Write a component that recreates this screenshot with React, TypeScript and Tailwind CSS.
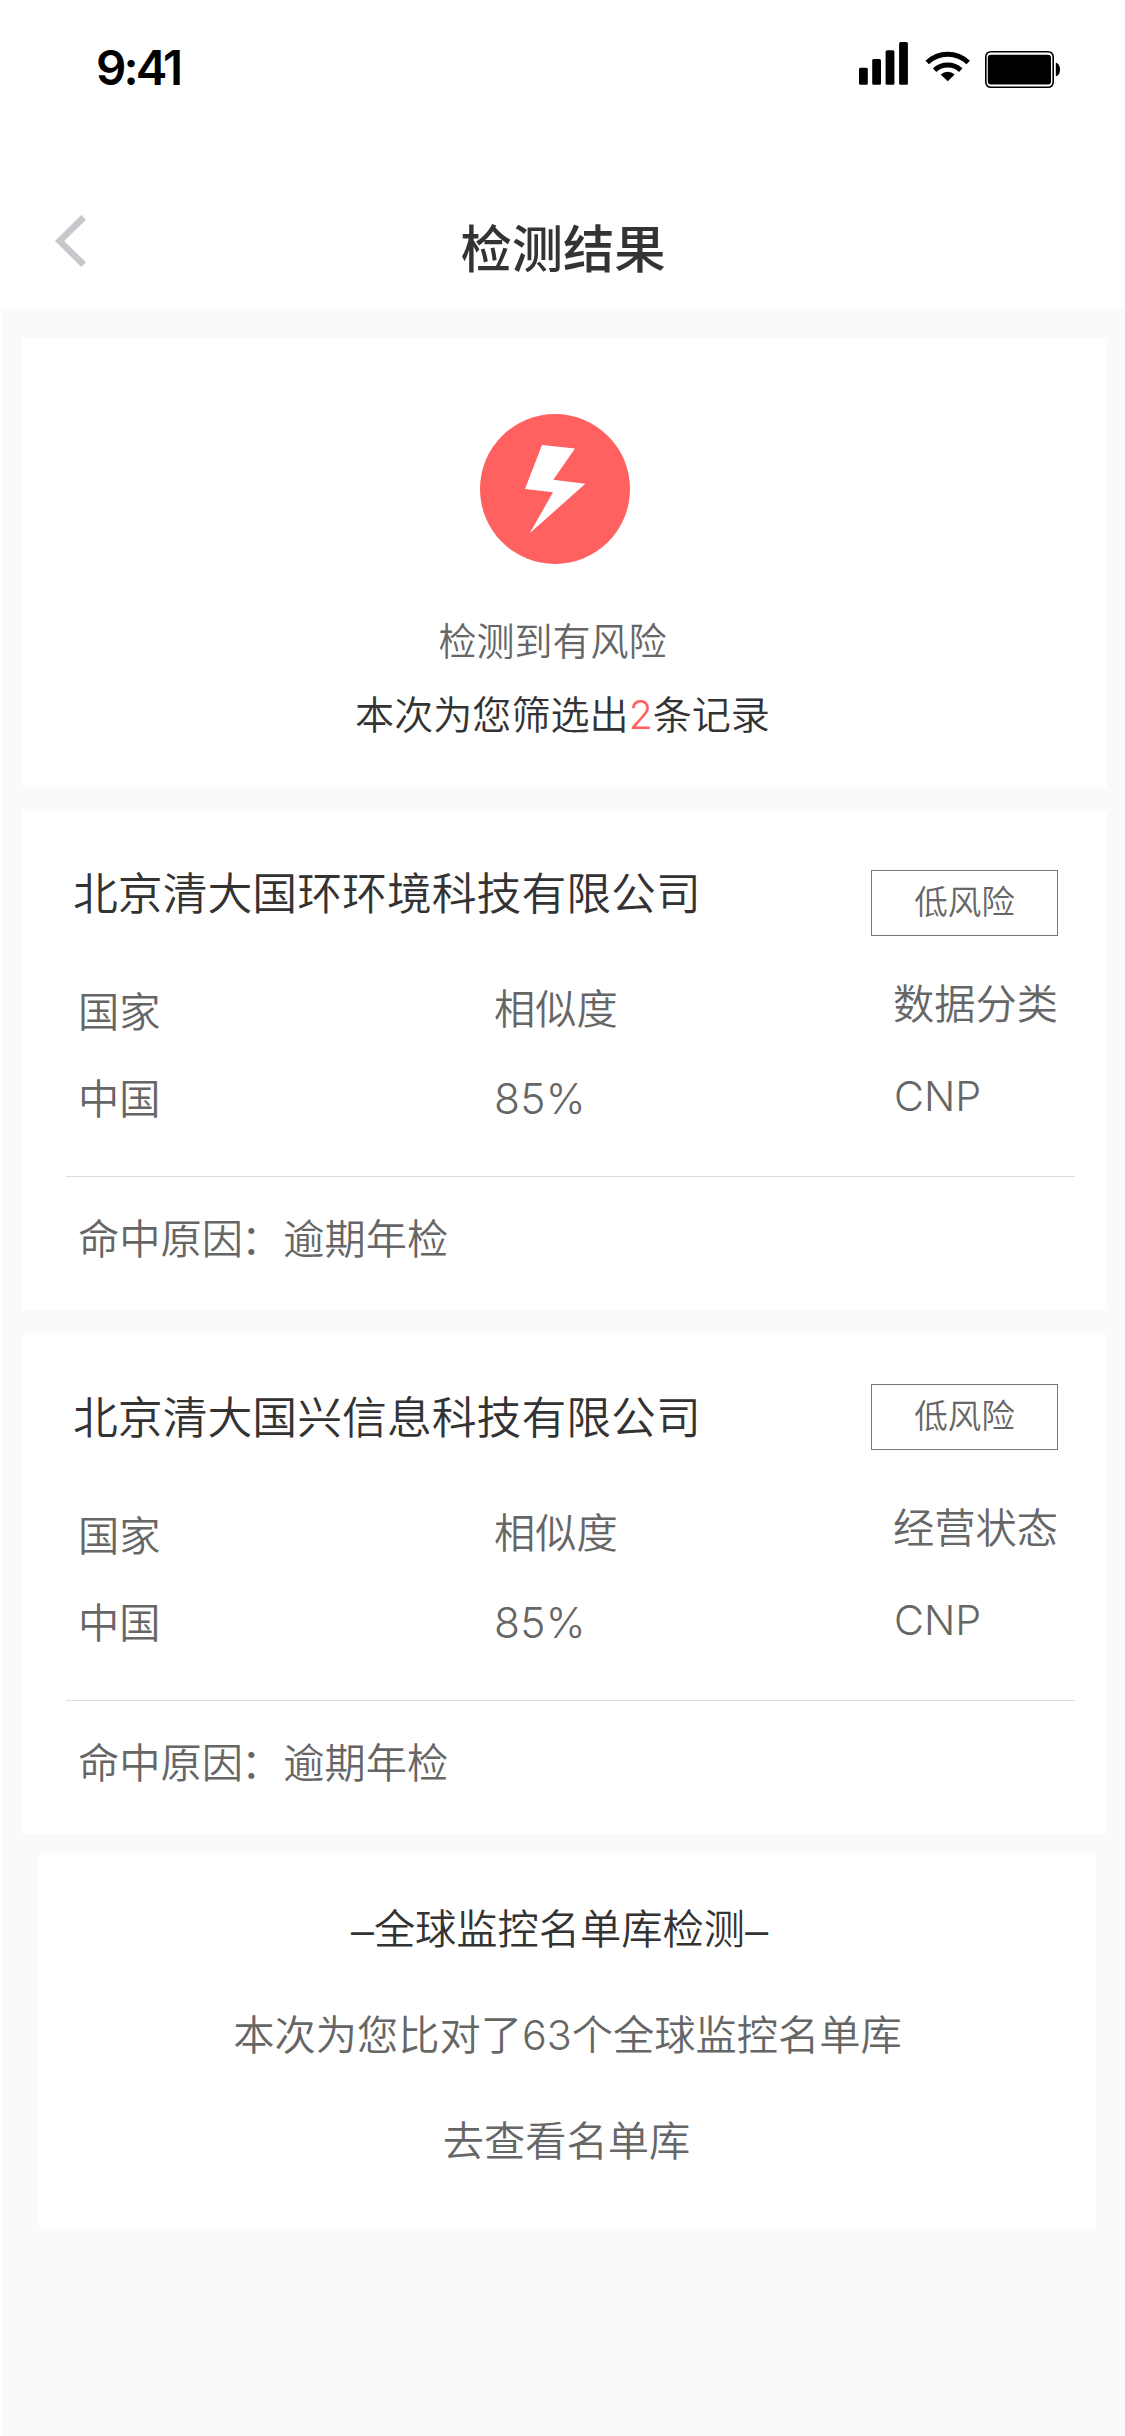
import type { ReactNode } from "react";

type Company = {
  name: string;
  category: string;
  badgeOffset: string;
};

const companies: Company[] = [
  { name: "北京清大国环环境科技有限公司", category: "数据分类", badgeOffset: "mt-[59px]" },
  { name: "北京清大国兴信息科技有限公司", category: "经营状态", badgeOffset: "mt-[49px]" },
];

function StatusBar() {
  return (
    <div className="flex h-[132px] items-start justify-between pl-[96px] pr-[64px]">
      <span className="mt-[38px] font-['Inter'] text-[47.500px] font-[570] leading-[60px] tracking-[-2.900px] text-black">
        9:41
      </span>
      <svg className="mt-[42px] h-[47px] w-[202px]" viewBox="0 0 202 47" fill="#000">
        <rect x="0" y="25.7" width="8.8" height="17" rx="1.5" />
        <rect x="13.2" y="17" width="8.8" height="25.7" rx="1.5" />
        <rect x="26.6" y="8.3" width="8.8" height="34.4" rx="1.5" />
        <rect x="40.1" y="0" width="8.8" height="42.7" rx="1.5" />
        <g fill="none" stroke="#000" strokeWidth="5">
          <path d="M68.2 20.500a29.500 29.500 0 0 1 41 0" />
          <path d="M75.6 28.100a19.200 19.200 0 0 1 26.2 0" />
        </g>
        <path d="M88.7 39.300l-7-6.900a10.500 10.500 0 0 1 14 0z" />
        <rect x="126.8" y="9.7" width="67.4" height="35.6" rx="5" fill="none" stroke="#000" strokeWidth="1.6" />
        <rect x="128.800" y="12.800" width="63.2" height="29.600" rx="3" />
        <path d="M196.8 20.7c2.6.5 4.2 3.200 4.200 6.800s-1.600 6.300-4.200 6.800z" />
      </svg>
    </div>
  );
}

function Header() {
  return (
    <div className="grid h-[177px] grid-cols-[200px_1fr_200px] items-start">
      <svg className="ml-[55px] mt-[83px] h-[52px] w-[31px]" viewBox="0 0 31 52" fill="none" stroke="#c7c7cc" strokeWidth="6.6">
        <path d="M28.600 2.300L4.600 26l24 23.700" />
      </svg>
      <h1 className="ml-px mt-[87px] text-center text-[51.300px] font-medium leading-[60px] text-[#333]">检测结果</h1>
    </div>
  );
}

function Summary() {
  return (
    <section className="ml-[20px] mt-[29px] flex h-[449px] w-[1085px] flex-col items-center bg-white">
      <svg className="mr-[19px] mt-[76px] h-[150px] w-[150px]" viewBox="0 0 150 150">
        <circle cx="75" cy="75" r="75" fill="#ff6060" />
        <path d="M62 31l33 3.600-21.700 31.200 32 4-55.600 49.500L73 78.300l-28-3.300z" fill="#fff" />
      </svg>
      <p className="mr-[24px] mt-[52px] text-[38px] leading-[50px] text-[#666]">检测到有风险</p>
      <p className="mr-[4px] mt-[24px] text-[39.100px] leading-[50px] text-[#333]">
        本次为您筛选出<span className="text-[#ff6060]">2</span>条记录
      </p>
    </section>
  );
}

function Field({ label, value, className }: { label: ReactNode; value: ReactNode; className: string }) {
  return (
    <div className={className}>
      <p>{label}</p>
      <p>{value}</p>
    </div>
  );
}

function CompanyCard({ name, category, badgeOffset }: Company) {
  return (
    <section className="ml-[20px] h-[499px] w-[1085px] bg-white text-[41.250px] leading-[50px] text-[#666]">
      <div className="flex h-[154px] items-start justify-between pl-[51px] pr-[49px]">
        <h2 className="mt-[58px] text-[44.850px] leading-[50px] text-[#333]">{name}</h2>
        <div className={"flex h-[66px] w-[187px] justify-center border border-[#777] text-[33.500px] leading-[64px] " + badgeOffset}>
          <span className="-mt-px">低风险</span>
        </div>
      </div>
      <div className="flex h-[211px] items-start pl-[56px]">
        <Field label="国家" value="中国" className="mt-[22px] flex w-[416px] flex-col gap-[37px]" />
        <Field
          label="相似度"
          value={<span className="text-[42.500px] tracking-[0.300px]">85%</span>}
          className="mt-[19px] flex w-[399px] flex-col gap-[40px]"
        />
        <Field
          label={category}
          value={<span className="ml-px">CNP</span>}
          className="mt-[14px] flex flex-col gap-[42px]"
        />
      </div>
      <div className="ml-[44px] h-px w-[1009px] bg-[#ddd]" />
      <p className="ml-[56px] mt-[37px]">
        命中原因<span className="-ml-[2px] mr-[1px]">：</span>逾期年检
      </p>
    </section>
  );
}

function WatchList() {
  const dash = <span className="font-['Liberation_Sans']">–</span>;
  return (
    <section className="ml-[37px] mt-[21px] flex h-[373px] w-[1057px] flex-col items-center bg-white text-[41.250px] leading-[50px] text-[#666]">
      <p className="mr-[16px] mt-[49px] text-[#333]">
        {dash}全球监控名单库检测{dash}
      </p>
      <p className="mt-[55px]">本次为您比对了63个全球监控名单库</p>
      <p className="mr-[2px] mt-[56px]">去查看名单库</p>
    </section>
  );
}

export default function App() {
  return (
    <div className="h-[2436px] w-[1125px] overflow-hidden bg-white font-['Inter','Noto_Sans_CJK_SC',sans-serif] font-[350]">
      <StatusBar />
      <Header />
      <main className="ml-[2px] flex h-[2127px] flex-col bg-[#fafafa]">
        <Summary />
        <div className="mt-[24px] flex flex-col gap-[25px]">
          {companies.map((company) => (
            <CompanyCard key={company.name} {...company} />
          ))}
        </div>
        <WatchList />
      </main>
    </div>
  );
}
